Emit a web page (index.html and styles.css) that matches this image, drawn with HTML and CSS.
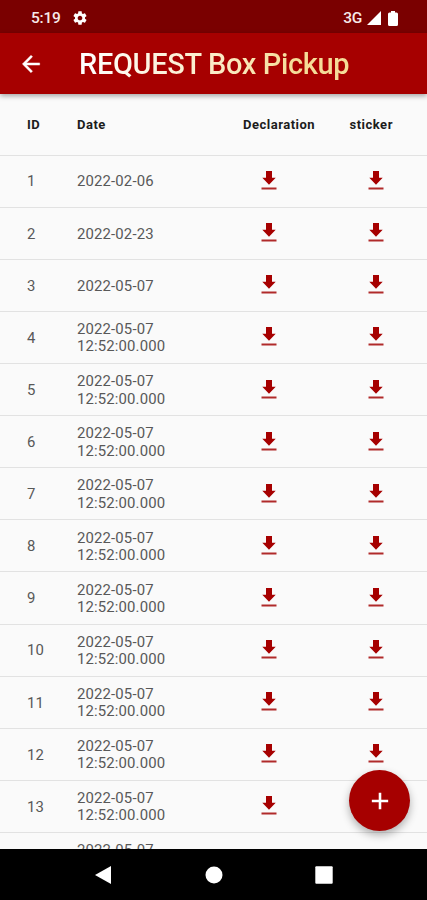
FILE: index.html
```html
<!DOCTYPE html>
<html lang="en">
<head>
  <meta charset="UTF-8">
  <title>Request Box Pickup</title>
  <link rel="stylesheet" href="styles.css">
</head>
<body>

<svg class="defs">
  <symbol id="download" viewBox="0 0 16 20">
    <path class="arrow" d="M5 0h6v6.800h3.700L8 13.700 1.300 6.800H5z"/>
    <path class="bar" d="M0.500 16.500h15v2h-15z"/>
  </symbol>
</svg>

<div class="status-bar">
  <span class="time">5:19</span>
  <svg class="gear" width="16" height="16" viewBox="0 0 24 24"><path d="M19.43 12.98c.04-.32.07-.64.07-.98s-.03-.66-.07-.98l2.11-1.65c.19-.15.24-.42.12-.64l-2-3.46c-.12-.22-.39-.3-.61-.22l-2.49 1c-.52-.4-1.08-.73-1.69-.98l-.38-2.65C14.46 2.18 14.25 2 14 2h-4c-.25 0-.46.18-.49.42l-.38 2.65c-.61.25-1.17.59-1.69.98l-2.49-1c-.23-.09-.49 0-.61.22l-2 3.46c-.13.22-.07.49.12.64l2.11 1.65c-.04.32-.07.65-.07.98s.03.66.07.98l-2.11 1.65c-.19.15-.24.42-.12.64l2 3.46c.12.22.39.3.61.22l2.49-1c.52.4 1.08.73 1.69.98l.38 2.65c.03.24.24.42.49.42h4c.25 0 .46-.18.49-.42l.38-2.65c.61-.25 1.17-.59 1.69-.98l2.49 1c.23.09.49 0 .61-.22l2-3.46c.12-.22.07-.49-.12-.64l-2.11-1.65zM12 15.5c-1.93 0-3.5-1.57-3.5-3.5s1.57-3.5 3.5-3.5 3.5 1.57 3.5 3.5-1.57 3.5-3.5 3.5z"/></svg>
  <span class="network">3G</span>
  <svg class="signal" width="14" height="14" viewBox="0 0 14 14"><path d="M0 14L14 0v14z"/></svg>
  <svg class="battery" width="10" height="15" viewBox="0 0 10 15"><path d="M3 0h4v1.5h1.5Q10 1.7 10 3v10.5Q10 15 8.5 15h-7Q0 15 0 13.5V3Q0 1.7 1.5 1.5H3z"/></svg>
</div>

<div class="app-bar">
  <svg class="back" width="26" height="26" viewBox="0 0 24 24"><path d="M20 11H7.83l5.59-5.59L12 4l-8 8 8 8 1.41-1.41L7.83 13H20v-2z"/></svg>
  <h1 class="title">REQUEST Box Pickup</h1>
</div>

<div class="content">
  <div class="row head">
    <div>ID</div>
    <div>Date</div>
    <div class="declaration">Declaration</div>
    <div class="sticker">sticker</div>
  </div>
  <div id="rows"></div>
  <button class="fab" aria-label="Add">
    <svg width="28" height="28" viewBox="0 0 24 24"><path d="M19 13.100h-5.900V19h-2.200v-5.900H5v-2.200h5.900V5h2.200v5.900H19z"/></svg>
  </button>
</div>

<div class="nav-bar">
  <svg width="18" height="20" viewBox="0 0 18 20"><path d="M17 1v18L1 10z"/></svg>
  <svg width="18" height="18" viewBox="0 0 18 18"><circle cx="9" cy="9" r="8.5"/></svg>
  <svg width="18" height="18" viewBox="0 0 18 18"><rect x="0.3" y="0.3" width="17.4" height="17.4" rx="1"/></svg>
</div>

<script>
const dates = ['2022-02-06', '2022-02-23', '2022-05-07'];
while (dates.length < 14) {
  dates.push('2022-05-07<br>12:52:00.000');
}

const icon = '<svg class="download"><use href="#download"/></svg>';

document.getElementById('rows').innerHTML = dates.map((date, i) => `
  <div class="row">
    <div class="text">${i + 1}</div>
    <div class="text">${date}</div>
    <div class="declaration">${icon}</div>
    <div class="sticker">${icon}</div>
  </div>`).join('');
</script>

</body>
</html>
```
FILE: styles.css
```css
body {
  margin: 0;
  height: 900px;
  display: flex;
  flex-direction: column;
  overflow: hidden;
  font-family: Roboto, sans-serif;
  background-color: #fafafa;
}

.defs {
  display: none;
}

.status-bar {
  flex: none;
  box-sizing: border-box;
  height: 33px;
  display: flex;
  align-items: center;
  padding: 3px 29px 0 31px;
  background-color: #7a0000;
  color: #f7e9e9;
  fill: #fff;
}

.time {
  width: 41px;
  font-size: 15.5px;
  font-weight: 500;
  letter-spacing: -0.2px;
}

.network {
  margin-left: auto;
  font-size: 15.5px;
  font-weight: 500;
  letter-spacing: -0.3px;
}

.signal {
  margin-left: 5px;
}

.battery {
  margin-left: 7px;
}

.app-bar {
  flex: none;
  height: 61px;
  display: flex;
  align-items: center;
  padding-left: 18px;
  background-color: #a60000;
  box-shadow: 0 2px 5px rgba(0, 0, 0, 0.35);
  fill: #fff;
  stroke: #fff;
  stroke-width: 0.4px;
  z-index: 1;
}

.title {
  margin: 0 0 0 35px;
  font-size: 29px;
  font-weight: 500;
  letter-spacing: -0.35px;
  background: linear-gradient(to right, #fff 0%, #fbecc8 50%, #f5dc98 80%);
  -webkit-background-clip: text;
  background-clip: text;
  color: transparent;
}

.content {
  flex: 1;
  min-height: 0;
  position: relative;
  overflow: hidden;
}

.row {
  box-sizing: border-box;
  height: 52.12px;
  display: grid;
  grid-template-columns: 50px 166px 106.5px 1fr;
  align-items: center;
  padding-left: 27px;
  border-bottom: 1px solid #e2e2e2;
  font-size: 14.9px;
  line-height: 17.4px;
  letter-spacing: 0.15px;
  color: #585858;
}

.text {
  padding-top: 2px;
}

.head {
  height: 61.6px;
  font-size: 13px;
  font-weight: 700;
  letter-spacing: 0.5px;
  color: #1c1c1c;
}

.download {
  display: block;
  width: 16px;
  height: 20px;
  margin-left: 18px;
}

.arrow {
  fill: #a60000;
}

.bar {
  fill: #b02a2a;
}

.fab {
  position: absolute;
  right: 17px;
  bottom: 18px;
  width: 61px;
  height: 61px;
  padding: 0;
  display: flex;
  align-items: center;
  justify-content: center;
  border: none;
  border-radius: 50%;
  background-color: #a60000;
  box-shadow: 0 4px 8px rgba(0, 0, 0, 0.3);
  fill: #fff;
}

.nav-bar {
  flex: none;
  height: 51px;
  display: flex;
  align-items: center;
  justify-content: space-between;
  padding: 0 94px;
  background-color: #000;
  fill: #fff;
}
```
